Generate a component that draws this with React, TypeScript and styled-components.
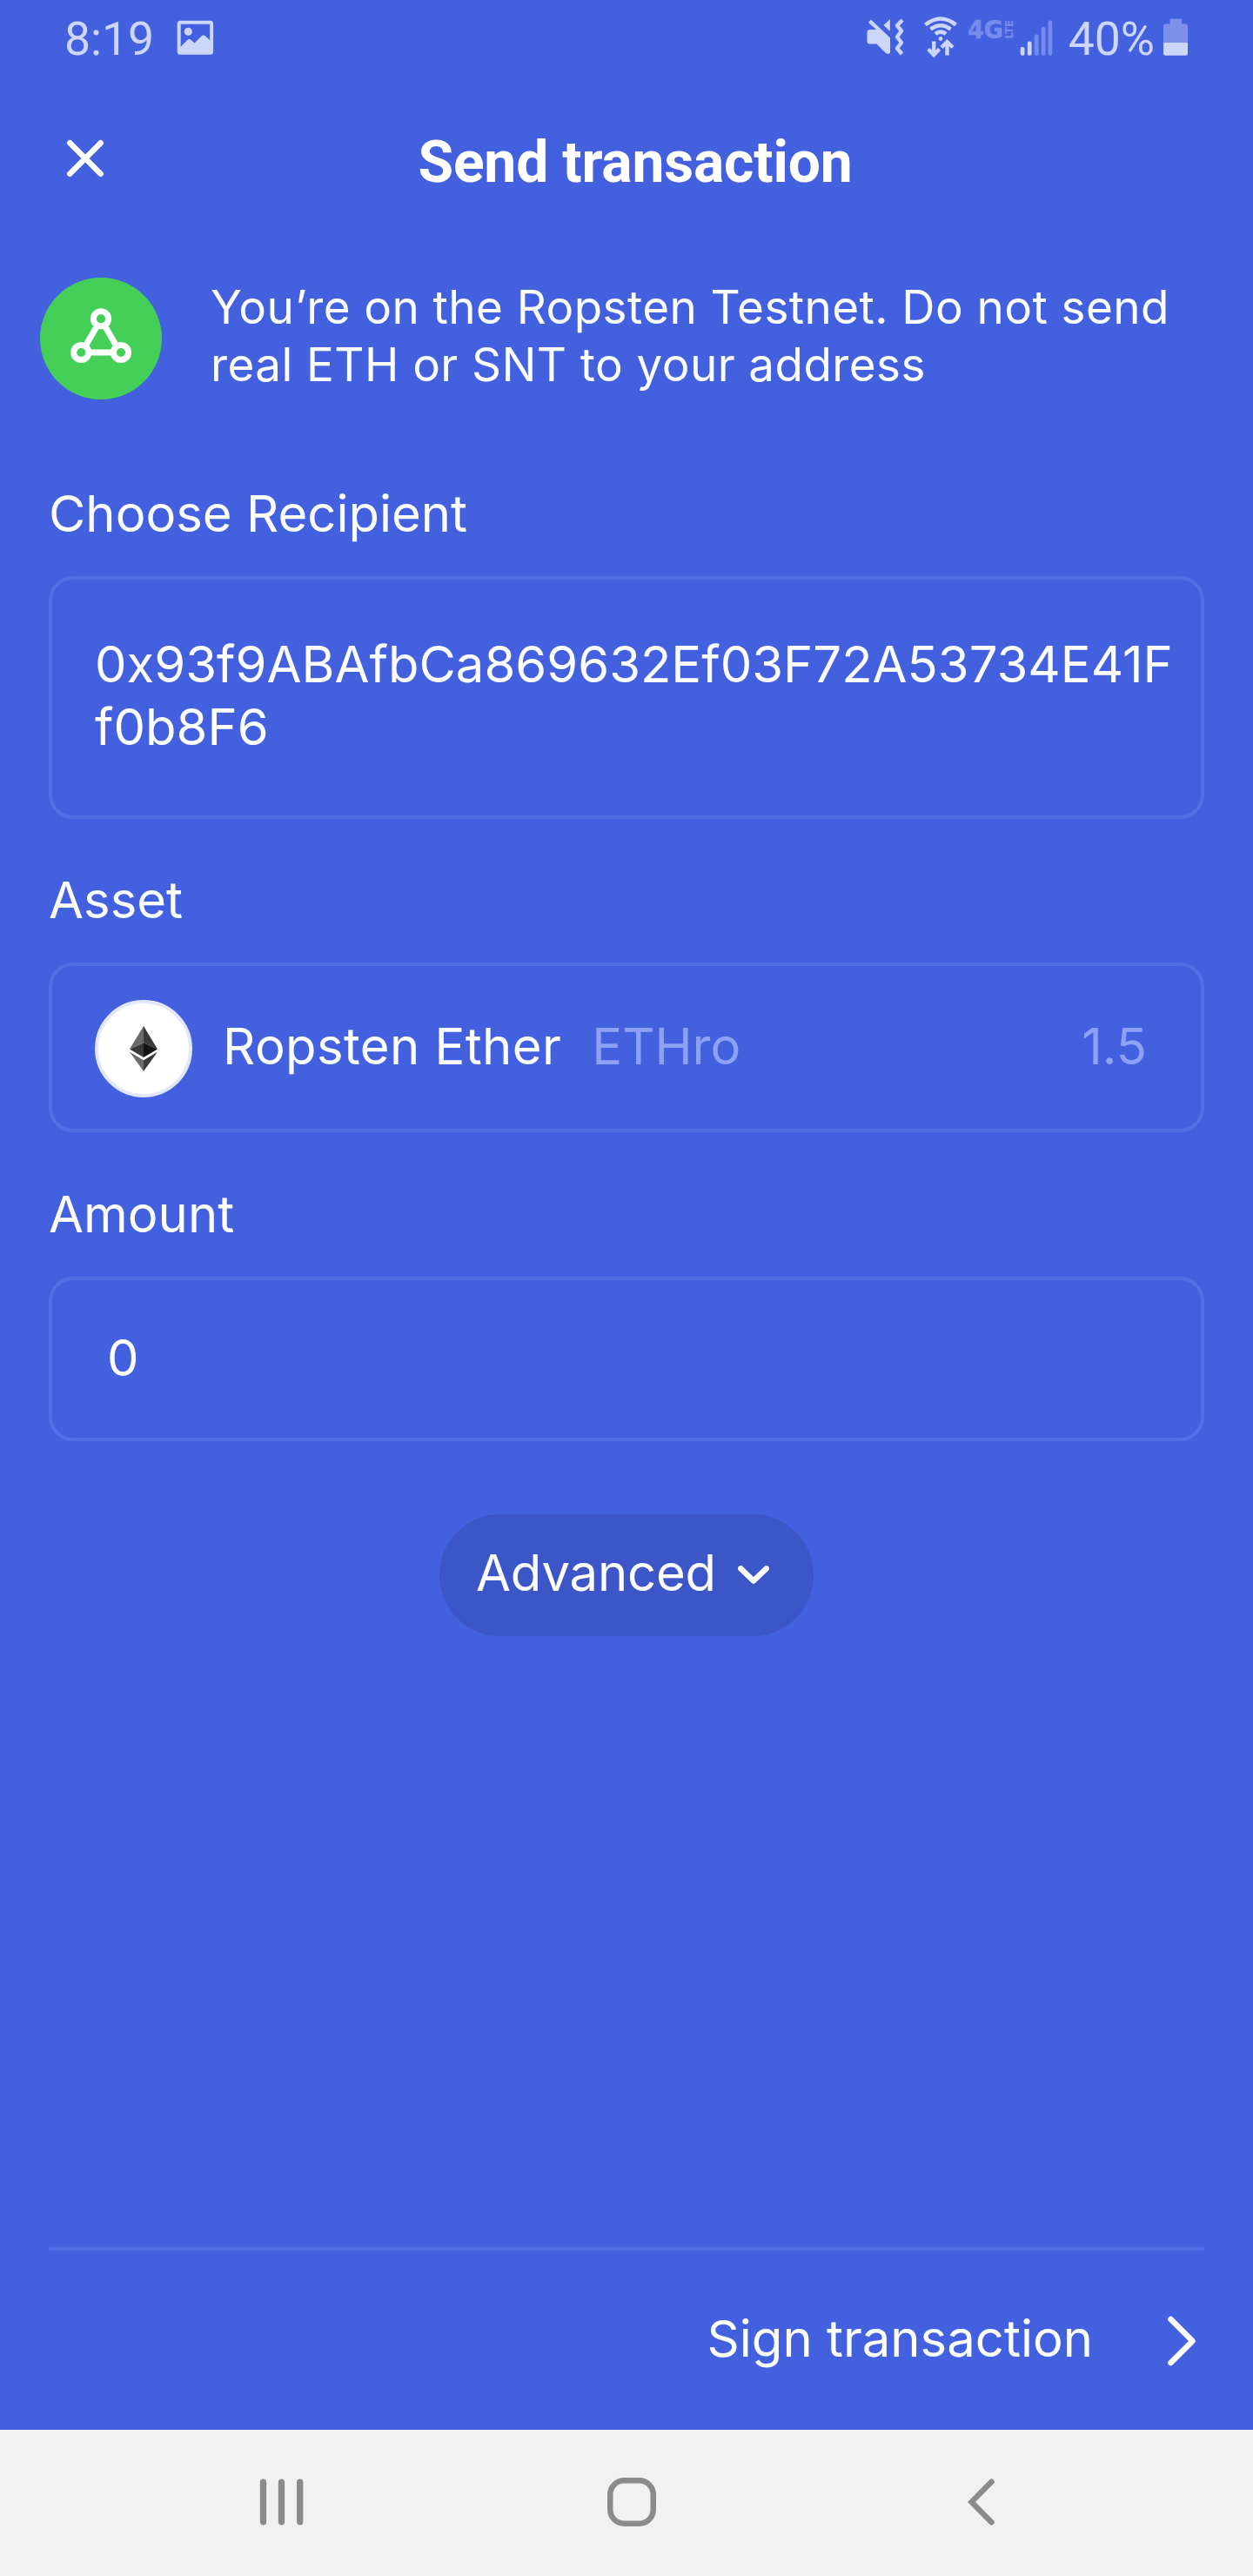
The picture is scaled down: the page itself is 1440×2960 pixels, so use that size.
import React from "react";
import styled, { createGlobalStyle } from "styled-components";

const GlobalStyle = createGlobalStyle`
  html, body { margin: 0; padding: 0; background: #4360df; }
  * { box-sizing: border-box; }
`;

const Screen = styled.div`
  width: 1440px;
  height: 2960px;
  display: flex;
  flex-direction: column;
  background: #4360df;
  color: #fbfdff;
  font-family: Inter, "Liberation Sans", sans-serif;
  font-optical-sizing: none;
  font-size: 58px;
  line-height: 72px;
`;

const StatusBar = styled.header`
  display: flex;
  justify-content: space-between;
  height: 88px;
  padding: 0 74px;
  font-family: Roboto, sans-serif;
  font-size: 53.5px;
  line-height: 90px;
  color: #ccd6f8;
`;

const StatusGroup = styled.div`
  display: flex;
  align-items: flex-start;
`;

const StatusText = styled.span<{ $gap: number }>`
  margin-left: ${(p) => p.$gap}px;
  white-space: nowrap;
`;

const StatusIcon = styled.svg<{ $gap: number }>`
  display: block;
  flex: none;
  overflow: visible;
  margin-left: ${(p) => p.$gap}px;
`;

const TitleBar = styled.div`
  display: grid;
  grid-template-columns: 196px 1fr 176px;
  align-items: center;
  height: 196px;
`;

const CloseButton = styled.button`
  display: flex;
  width: 196px;
  height: 192px;
  padding: 0 0 8px 76px;
  align-items: center;
  border: 0;
  background: none;
`;

const Title = styled.h1`
  margin: 1px 0 0;
  text-align: center;
  font-family: Roboto, sans-serif;
  font-size: 66px;
  line-height: 80px;
  font-weight: 700;
  letter-spacing: -0.2px;
  color: #ffffff;
`;

const Notice = styled.section`
  display: flex;
  align-items: center;
  gap: 56px;
  height: 140px;
  margin: 35px 46px 0;
`;

const NoticeIcon = styled.div`
  display: flex;
  flex: none;
  align-items: center;
  justify-content: center;
  width: 140px;
  height: 140px;
  border-radius: 50%;
  background: #44d058;
`;

const NoticeText = styled.p`
  margin: 0 0 7px;
  font-size: 53px;
  line-height: 66px;
  letter-spacing: 0.42px;
  white-space: nowrap;
`;

const Form = styled.main`
  display: flex;
  flex: 1;
  flex-direction: column;
  padding: 95px 56px 0;
`;

const Label = styled.label`
  margin-bottom: 36px;
  white-space: nowrap;
`;

const Field = styled.div<{ $height: number; $after: number; $left: number }>`
  display: flex;
  align-items: center;
  height: ${(p) => p.$height}px;
  margin-bottom: ${(p) => p.$after}px;
  padding: 0 62px 3px ${(p) => p.$left}px;
  border: 4px solid #5270e5;
  border-radius: 28px;
`;

const Address = styled.div`
  margin-bottom: 2px;
  white-space: nowrap;
`;

const TokenBadge = styled.div`
  display: flex;
  align-items: center;
  justify-content: center;
  flex: none;
  width: 112px;
  height: 112px;
  margin: 6px 35px 0 0;
  border: 4px solid #e2e8fb;
  border-radius: 50%;
  background: #ffffff;
`;

const TokenName = styled.span`
  letter-spacing: 0.4px;
`;

const TokenSymbol = styled.span`
  margin-left: 35px;
  color: #8da2f5;
`;

const Balance = styled.span`
  margin-left: auto;
  color: #8da2f5;
`;

const AdvancedButton = styled.button`
  display: flex;
  align-items: center;
  align-self: center;
  gap: 25px;
  width: 430px;
  height: 140px;
  padding: 0 0 6px 42px;
  border: 0;
  border-radius: 70px;
  background: #3c55c7;
  color: inherit;
  font: inherit;
  letter-spacing: -0.2px;
  white-space: nowrap;
`;

const AdvancedChevron = styled.svg`
  display: block;
  margin-top: 6px;
`;

const Footer = styled.footer`
  display: flex;
  align-items: center;
  justify-content: flex-end;
  gap: 86px;
  height: 210px;
  margin: 0 56px;
  padding-right: 10px;
  border-top: 4px solid #5270e5;
`;

const SignLabel = styled.span`
  margin-bottom: 5px;
`;

const SignChevron = styled.svg`
  display: block;
  margin-top: 2px;
`;

const NavBar = styled.nav`
  display: flex;
  align-items: center;
  height: 168px;
  padding-left: 298px;
  background: #f1f1f1;
`;

const NavIcon = styled.svg<{ $gap: number }>`
  display: block;
  margin: 0 ${(p) => p.$gap}px 3px 0;
`;

const ImageIcon = () => (
  <StatusIcon $gap={25} width="44" height="88" viewBox="202 0 44 88">
    <rect x="205.7" y="25.7" width="37.4" height="35" rx="1.5" fill="none" stroke="#ccd6f8" strokeWidth="4" />
    <circle cx="216.3" cy="36.3" r="4.6" fill="#ccd6f8" />
    <path d="M207 54.5L215 46.3Q217.5 43.8 220 46.3L223.5 49.5L231.5 41.5Q234 39.5 236.5 41.7L242 47V61H207Z" fill="#ccd6f8" />
  </StatusIcon>
);

const VibrateIcon = () => (
  <StatusIcon $gap={0} width="46" height="88" viewBox="995 0 46 88" fill="#ccd6f8">
    <path d="M1001 22.500L1023 43.500V60Q1022 63.500 1018 61L1007.500 50.500H1000Q996.500 50.500 996.500 47.500V38Q996.500 34 1000 34H1007L998 26Z" />
    <path d="M1022.800 22V36L1015.500 29Z" />
    <path d="M1037 23L1031 29.500L1036 35.500L1031 42.500L1036 49L1031 55.500L1036.500 62" fill="none" stroke="#ccd6f8" strokeWidth="4.500" strokeLinejoin="round" />
  </StatusIcon>
);

const WifiIcon = () => (
  <StatusIcon $gap={21} width="38" height="88" viewBox="1062 0 38 88" fill="none" stroke="#ccd6f8" strokeWidth="4.500">
    <path d="M1063.500 28.500Q1081 14.500 1098.500 28.500" />
    <path d="M1069.500 33.600Q1081 25 1092.500 33.600" />
    <path d="M1074.800 38.800Q1081 34.500 1087.200 38.800" />
    <circle cx="1081" cy="44.500" r="2.400" fill="#ccd6f8" stroke="none" />
    <path d="M1073.200 47.500V62M1066.800 56.500L1073.200 63L1079.600 56.500M1088.500 63.500V49M1082 54.500L1088.500 48L1095 54.500" strokeWidth="4.400" />
  </StatusIcon>
);

const NetworkIcon = () => (
  <StatusIcon $gap={11} width="54" height="88" viewBox="1111 0 54 88" fill="#768bea">
    <text x="1112" y="44" fontFamily="DejaVu Sans" fontWeight="700" fontSize="27.500" textLength="41" lengthAdjust="spacingAndGlyphs" stroke="#768bea" strokeWidth="0.600">4G</text>
    <text transform="translate(1163.500 44.500) rotate(-90)" fontFamily="DejaVu Sans" fontWeight="700" fontSize="12" textLength="21.500" lengthAdjust="spacingAndGlyphs">LTE</text>
  </StatusIcon>
);

const SignalIcon = () => (
  <StatusIcon $gap={7} width="38" height="88" viewBox="1172 0 38 88">
    <rect x="1172.700" y="54" width="4.800" height="9.800" rx="2" fill="#ccd6f8" />
    <rect x="1180.800" y="47.500" width="4.800" height="16.300" rx="2" fill="#ccd6f8" />
    <rect x="1188.800" y="39.500" width="4.800" height="24.300" rx="2" fill="#768bea" />
    <rect x="1196.800" y="31" width="4.800" height="32.800" rx="2" fill="#768bea" />
    <rect x="1204.500" y="23.500" width="4.800" height="40.300" rx="2" fill="#768bea" />
  </StatusIcon>
);

const BatteryIcon = () => (
  <StatusIcon $gap={9} width="30" height="88" viewBox="1337 0 30 88">
    <path d="M1345.500 21.500H1359V27.500H1363.500Q1366 27.500 1366 30V49H1338V30Q1338 27.500 1340.500 27.500H1345.500Z" fill="#7c90ea" />
    <path d="M1338 49H1366V61.500Q1366 63.800 1363.500 63.800H1340.500Q1338 63.800 1338 61.500Z" fill="#ccd6f8" />
  </StatusIcon>
);

const CloseIcon = () => (
  <svg width="44" height="44" viewBox="0 0 44 44" fill="none" stroke="#ffffff" strokeWidth="6.500" strokeLinecap="round">
    <path d="M4.300 4.300L39.700 39.700M39.700 4.300L4.300 39.700" />
  </svg>
);

const TestnetIcon = () => (
  <svg width="140" height="140" viewBox="0 0 140 140" fill="none" stroke="#ffffff" strokeWidth="7">
    <path d="M65 56.500L52.500 78M75 56.500L87.500 78M57 86H83" />
    <circle cx="70" cy="47.300" r="8.600" />
    <circle cx="47.300" cy="86" r="8.600" />
    <circle cx="93" cy="86" r="8.600" />
  </svg>
);

const EtherIcon = () => (
  <svg width="32" height="52" viewBox="0 0 32 52">
    <path d="M16 0L0 26.500L16 19.300Z" fill="#6b6b6b" />
    <path d="M16 0L32 26.500L16 19.300Z" fill="#3a3a3a" />
    <path d="M0 26.500L16 19.300V36Z" fill="#393939" />
    <path d="M32 26.500L16 19.300V36Z" fill="#141414" />
    <path d="M0 29.800L16 39.300V52Z" fill="#6b6b6b" />
    <path d="M32 29.800L16 39.300V52Z" fill="#3a3a3a" />
  </svg>
);

const App: React.FC = () => (
  <>
    <GlobalStyle />
    <Screen>
      <StatusBar>
        <StatusGroup>
          <StatusText $gap={0}>8:19</StatusText>
          <ImageIcon />
        </StatusGroup>
        <StatusGroup>
          <VibrateIcon />
          <WifiIcon />
          <NetworkIcon />
          <SignalIcon />
          <StatusText $gap={18}>40%</StatusText>
          <BatteryIcon />
        </StatusGroup>
      </StatusBar>

      <TitleBar>
        <CloseButton aria-label="Close">
          <CloseIcon />
        </CloseButton>
        <Title>Send transaction</Title>
      </TitleBar>

      <Notice>
        <NoticeIcon>
          <TestnetIcon />
        </NoticeIcon>
        <NoticeText>
          You’re on the Ropsten Testnet. Do not send
          <br />
          real ETH or SNT to your address
        </NoticeText>
      </Notice>

      <Form>
        <Label>Choose Recipient</Label>
        <Field $height={279} $after={57} $left={49}>
          <Address>
            0x93f9ABAfbCa869632Ef03F72A53734E41F
            <br />
            f0b8F6
          </Address>
        </Field>

        <Label>Asset</Label>
        <Field $height={195} $after={58} $left={49}>
          <TokenBadge>
            <EtherIcon />
          </TokenBadge>
          <TokenName>Ropsten Ether</TokenName>
          <TokenSymbol>ETHro</TokenSymbol>
          <Balance>1.5</Balance>
        </Field>

        <Label>Amount</Label>
        <Field $height={189} $after={84} $left={63}>
          <span>0</span>
        </Field>

        <AdvancedButton>
          Advanced
          <AdvancedChevron width="36" height="22" viewBox="0 0 36 22" fill="none" stroke="#fbfdff" strokeWidth="6.500" strokeLinecap="round" strokeLinejoin="round">
            <path d="M3.300 3.300L18 17.500L32.700 3.300" />
          </AdvancedChevron>
        </AdvancedButton>
      </Form>

      <Footer>
        <SignLabel>Sign transaction</SignLabel>
        <SignChevron width="32" height="58" viewBox="0 0 32 58" fill="none" stroke="#ffffff" strokeWidth="6.500" strokeLinecap="round" strokeLinejoin="round">
          <path d="M3.500 4L28.500 29L3.500 54" />
        </SignChevron>
      </Footer>

      <NavBar>
        <NavIcon $gap={348} width="52" height="56" viewBox="0 0 52 56" stroke="#8b8b8b" strokeWidth="7.300" strokeLinecap="round">
          <path d="M4.500 5.200V50.800M25.500 5.200V50.800M46.700 5.200V50.800" />
        </NavIcon>
        <NavIcon $gap={358} width="56" height="56" viewBox="0 0 56 56" fill="none" stroke="#8b8b8b" strokeWidth="6.500">
          <rect x="3.250" y="3.250" width="49.500" height="49.500" rx="16" />
        </NavIcon>
        <NavIcon $gap={0} width="32" height="56" viewBox="0 0 32 56" fill="none" stroke="#8b8b8b" strokeWidth="6.500" strokeLinecap="round">
          <path d="M27.500 4.800L4.500 28L27.500 51.200" />
        </NavIcon>
      </NavBar>
    </Screen>
  </>
);

export default App;
